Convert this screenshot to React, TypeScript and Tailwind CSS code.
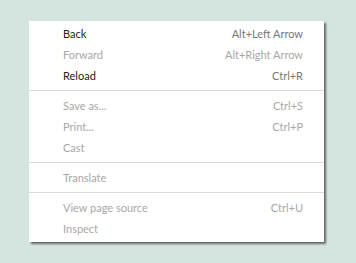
import React from "react";

type Item = { label: string; shortcut?: string; enabled?: boolean };

const groups: Item[][] = [
  [
    { label: "Back", shortcut: "Alt+Left Arrow", enabled: true },
    { label: "Forward", shortcut: "Alt+Right Arrow" },
    { label: "Reload", shortcut: "Ctrl+R", enabled: true },
  ],
  [
    { label: "Save as...", shortcut: "Ctrl+S" },
    { label: "Print...", shortcut: "Ctrl+P" },
    { label: "Cast" },
  ],
  [{ label: "Translate" }],
  [
    { label: "View page source", shortcut: "Ctrl+U" },
    { label: "Inspect" },
  ],
];

function Row({ item }: { item: Item }) {
  return (
    <div className="flex h-[21px] items-center justify-between pl-[34px] pr-[21px] leading-[21px]">
      <span className={item.enabled ? "text-[#202020]" : "text-[#a8a8a8]"}>{item.label}</span>
      {item.shortcut && (
        <span className={item.enabled ? "text-[#777777]" : "text-[#a8a8a8]"}>{item.shortcut}</span>
      )}
    </div>
  );
}

export default function App() {
  return (
    <div className="h-[263px] w-[356px] bg-[#d4e5df] pl-[29px] pt-[21px]" style={{ fontFamily: 'Lato, "Noto Sans", sans-serif' }}>
      <div className="w-[295px] bg-white pb-[3px] pt-[2px] text-[11px] shadow-[2px_2px_2px_rgba(0,0,0,0.55)]">
        {groups.map((g, gi) => (
          <React.Fragment key={gi}>
            {gi > 0 && <div className="my-[4px] h-px bg-[#dadada]" />}
            {g.map((it) => (
              <Row key={it.label} item={it} />
            ))}
          </React.Fragment>
        ))}
      </div>
    </div>
  );
}
